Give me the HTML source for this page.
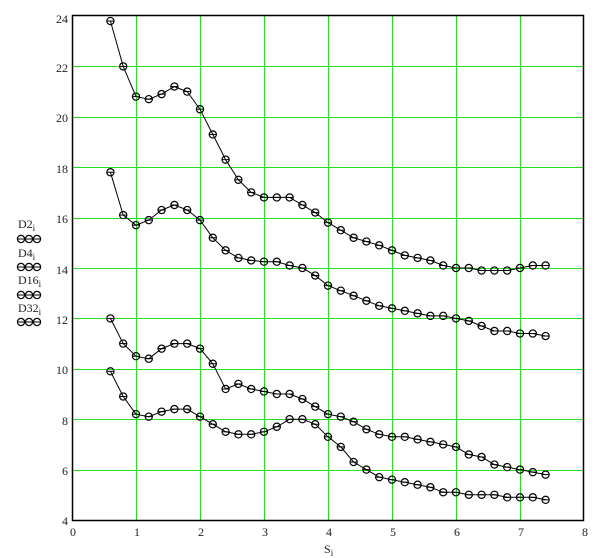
<!DOCTYPE html>
<html><head><style>
html,body{margin:0;padding:0;background:#fff;width:602px;height:558px;overflow:hidden}
svg{display:block}
text{font-family:"Liberation Serif",serif;font-size:12px;fill:#222}
</style></head><body>
<svg id="s" width="602" height="558" xmlns="http://www.w3.org/2000/svg">
<g id="grid"></g>
<rect x="72.5" y="15.5" width="511" height="505" fill="none" stroke="#000" stroke-width="1.5"/>
<g id="data"></g>
<g text-anchor="end">
<text x="68" y="23">24</text><text x="68" y="72">22</text><text x="68" y="122">20</text>
<text x="68" y="173">18</text><text x="68" y="223">16</text><text x="68" y="274">14</text>
<text x="68" y="324">12</text><text x="68" y="374">10</text><text x="68" y="425">8</text>
<text x="68" y="475">6</text><text x="68" y="525">4</text>
</g>
<g text-anchor="middle">
<text x="73" y="536">0</text><text x="137" y="536">1</text><text x="201" y="536">2</text>
<text x="265" y="536">3</text><text x="329" y="536">4</text><text x="393" y="536">5</text>
<text x="457" y="536">6</text><text x="521" y="536">7</text><text x="585" y="536">8</text>
</g>
<text x="324" y="553">S<tspan font-size="9" dy="3">i</tspan></text>
<text x="18" y="228">D2<tspan font-size="9" dy="3">i</tspan></text>
<text x="18" y="257">D4<tspan font-size="9" dy="3">i</tspan></text>
<text x="18" y="284">D16<tspan font-size="9" dy="3">i</tspan></text>
<text x="18" y="312">D32<tspan font-size="9" dy="3">i</tspan></text>
<g id="leg"></g>
</svg>
<script>
var NS="http://www.w3.org/2000/svg";
function el(p,t,a){var e=document.createElementNS(NS,t);for(var k in a)e.setAttribute(k,a[k]);p.appendChild(e);return e;}
var X=function(v){return 72+v*64}, Y=function(v){return 520-(v-4)*25.2};
var g=document.getElementById('grid');
for(var i=1;i<8;i++){var x=Math.round(X(i))+0.5;el(g,'line',{x1:x,x2:x,y1:16,y2:520,stroke:'#22dd22','stroke-width':1});}
for(var v=6;v<24;v+=2){var y=Math.round(Y(v))+0.5;el(g,'line',{x1:72,x2:584,y1:y,y2:y,stroke:'#22dd22','stroke-width':1});}
var S=[
[23.8,22,20.8,20.7,20.9,21.2,21.0,20.3,19.3,18.3,17.5,17.0,16.8,16.8,16.8,16.5,16.2,15.8,15.5,15.2,15.05,14.9,14.7,14.5,14.4,14.3,14.1,14.0,14.0,13.9,13.9,13.9,14.0,14.1,14.1],
[17.8,16.1,15.7,15.9,16.3,16.5,16.3,15.9,15.2,14.7,14.4,14.3,14.25,14.25,14.1,14.0,13.7,13.3,13.1,12.9,12.7,12.5,12.4,12.3,12.2,12.1,12.1,12.0,11.9,11.7,11.5,11.5,11.4,11.4,11.3],
[12.0,11.0,10.5,10.4,10.8,11.0,11.0,10.8,10.2,9.2,9.4,9.2,9.1,9.0,9.0,8.8,8.5,8.2,8.1,7.9,7.6,7.4,7.3,7.3,7.2,7.1,7.0,6.9,6.6,6.5,6.2,6.1,6.0,5.9,5.8],
[9.9,8.9,8.2,8.1,8.3,8.4,8.4,8.1,7.8,7.5,7.4,7.4,7.5,7.7,8.0,8.0,7.8,7.3,6.9,6.3,6.0,5.7,5.6,5.5,5.4,5.3,5.1,5.1,5.0,5.0,5.0,4.9,4.9,4.9,4.8]];
var d=document.getElementById('data');
function mk(p,x,y){el(p,'circle',{cx:x,cy:y,r:3.6,fill:'none',stroke:'#000','stroke-width':1.2});el(p,'line',{x1:x-3.6,x2:x+3.6,y1:y,y2:y,stroke:'#000','stroke-width':1});}
S.forEach(function(s){var pts=s.map(function(v,i){return X(0.6+0.2*i).toFixed(1)+','+Y(v).toFixed(1)}).join(' ');
el(d,'polyline',{points:pts,fill:'none',stroke:'#000','stroke-width':1});
s.forEach(function(v,i){mk(d,X(0.6+0.2*i),Y(v));});});
var lg=document.getElementById('leg');
[239,267,295,322].forEach(function(y){for(var k=0;k<3;k++)mk(lg,21+k*8,y);});
</script>
</body></html>
